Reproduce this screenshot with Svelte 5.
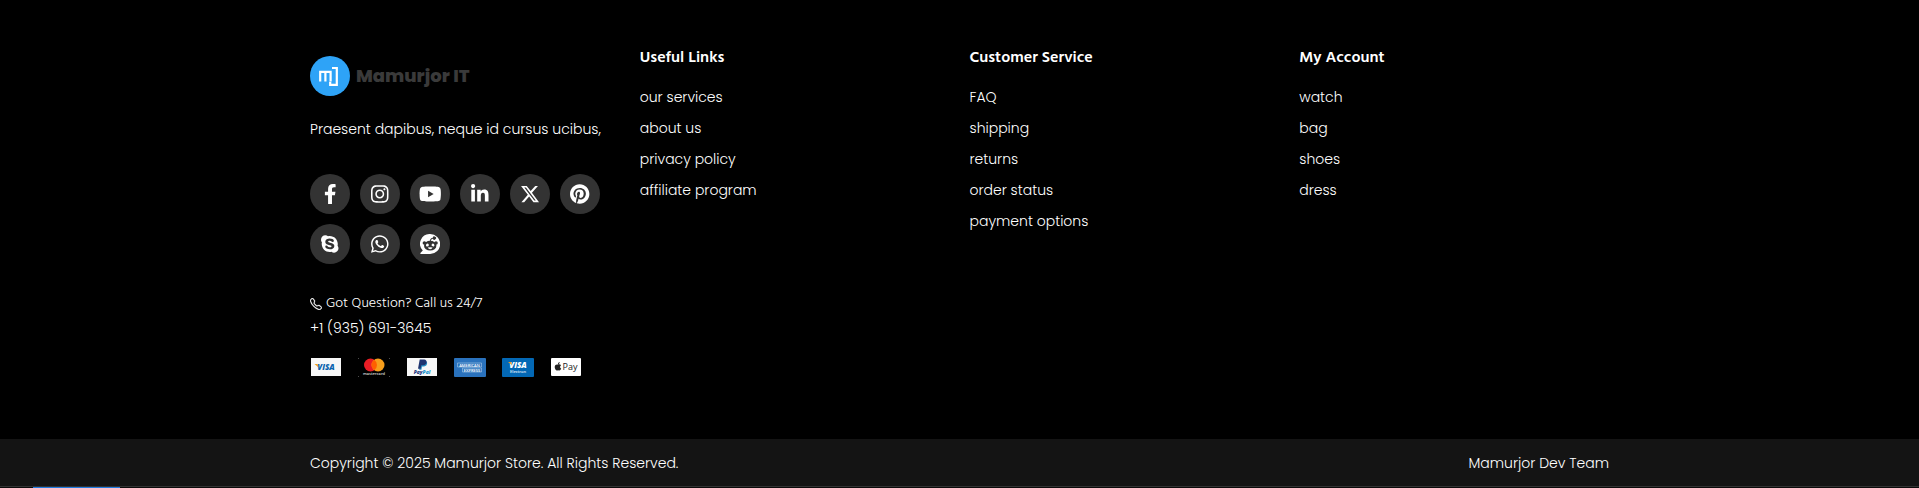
<script>
  const social = [
    { name: 'Facebook', box: '0 0 320 512', d: 'M279.14 288l14.22-92.66h-88.91v-60.13c0-25.35 12.42-50.06 52.24-50.06h40.42V6.26S260.43 0 225.36 0c-73.22 0-121.08 44.38-121.08 124.72v70.62H22.89V288h81.39v224h100.17V288z' },
    { name: 'Instagram', box: '0 0 448 512', d: 'M224.1 141c-63.6 0-114.9 51.3-114.9 114.9s51.3 114.9 114.9 114.9S339 319.5 339 255.9 287.7 141 224.1 141zm0 189.6c-41.1 0-74.7-33.5-74.7-74.7s33.5-74.7 74.7-74.7 74.7 33.5 74.7 74.7-33.6 74.7-74.7 74.7zm146.4-194.3c0 14.9-12 26.8-26.8 26.8-14.9 0-26.8-12-26.8-26.8s12-26.8 26.8-26.8 26.8 12 26.8 26.8zm76.1 27.2c-1.7-35.9-9.9-67.7-36.2-93.9-26.2-26.2-58-34.4-93.9-36.2-37-2.1-147.9-2.1-184.9 0-35.8 1.7-67.6 9.9-93.9 36.1s-34.4 58-36.2 93.9c-2.1 37-2.1 147.9 0 184.9 1.7 35.9 9.9 67.7 36.2 93.9s58 34.4 93.9 36.2c37 2.1 147.9 2.1 184.9 0 35.9-1.7 67.7-9.9 93.9-36.2 26.2-26.2 34.4-58 36.2-93.9 2.1-37 2.1-147.8 0-184.8zM398.8 388c-7.8 19.6-22.9 34.7-42.6 42.6-29.5 11.7-99.5 9-132.1 9s-102.7 2.6-132.1-9c-19.6-7.8-34.7-22.9-42.6-42.6-11.7-29.5-9-99.5-9-132.1s-2.6-102.7 9-132.1c7.8-19.6 22.9-34.7 42.6-42.6 29.5-11.7 99.5-9 132.1-9s102.7-2.6 132.1 9c19.6 7.8 34.7 22.9 42.6 42.6 11.7 29.5 9 99.5 9 132.1s2.7 102.7-9 132.1z' },
    { name: 'YouTube', box: '0 0 576 512', d: 'M549.655 124.083c-6.281-23.65-24.787-42.276-48.284-48.597C458.781 64 288 64 288 64S117.22 64 74.629 75.486c-23.497 6.322-42.003 24.947-48.284 48.597-11.412 42.867-11.412 132.305-11.412 132.305s0 89.438 11.412 132.305c6.281 23.65 24.787 41.5 48.284 47.821C117.22 448 288 448 288 448s170.78 0 213.371-11.486c23.497-6.321 42.003-24.171 48.284-47.821 11.412-42.867 11.412-132.305 11.412-132.305s0-89.438-11.412-132.305zm-317.51 213.508V175.185l142.739 81.205-142.739 81.201z' },
    { name: 'LinkedIn', box: '0 0 448 512', d: 'M100.28 448H7.4V148.9h92.88zM53.79 108.1C24.09 108.1 0 83.5 0 53.8a53.79 53.79 0 0 1 107.58 0c0 29.7-24.1 54.3-53.79 54.3zM447.9 448h-92.68V302.4c0-34.7-.7-79.2-48.29-79.2-48.29 0-55.69 37.7-55.69 76.7V448h-92.78V148.9h89.08v40.8h1.3c12.4-23.5 42.69-48.3 87.88-48.3 94 0 111.28 61.9 111.28 142.3V448z' },
    { name: 'X', box: '0 0 512 512', d: 'M389.2 48h70.6L305.6 224.2 487 464H345L233.7 318.6 106.5 464H35.8L200.7 275.5 26.8 48H172.4L272.9 180.9 389.2 48zM364.4 421.8h39.1L151.1 88h-42L364.4 421.8z' },
    { name: 'Pinterest', box: '0 0 496 512', d: 'M496 256c0 137-111 248-248 248-25.6 0-50.2-3.9-73.4-11.1 10.1-16.5 25.2-43.5 30.8-65 3-11.6 15.4-59 15.4-59 8.1 15.4 31.7 28.5 56.8 28.5 74.8 0 128.7-68.8 128.7-154.3 0-81.9-66.9-143.2-152.9-143.2-107 0-163.9 71.8-163.9 150.1 0 36.4 19.4 81.7 50.3 96.1 4.7 2.2 7.2 1.2 8.3-3.3.8-3.4 5-20.3 6.9-28.1.6-2.5.3-4.7-1.7-7.1-10.1-12.5-18.3-35.3-18.3-56.6 0-54.7 41.4-107.6 112-107.6 60.9 0 103.6 41.5 103.6 100.9 0 67.1-33.9 113.6-78 113.6-24.3 0-42.6-20.1-36.7-44.8 7-29.5 20.5-61.3 20.5-82.6 0-19-10.2-34.9-31.4-34.9-24.9 0-44.9 25.7-44.9 60.2 0 22 7.4 36.8 7.4 36.8s-24.5 103.8-29 123.2c-5 21.4-3 51.6-.9 71.2C65.4 450.9 0 361.1 0 256 0 119 111 8 248 8s248 111 248 248z' },
    { name: 'Skype', box: '0 0 448 512', d: 'M424.7 299.8c2.9-14 4.7-28.9 4.7-43.8 0-113.5-91.9-205.3-205.3-205.3-14.9 0-29.7 1.7-43.8 4.7C161.3 40.7 137.7 32 112 32 50.2 32 0 82.2 0 144c0 25.7 8.7 49.3 23.3 68.2-2.9 14-4.7 28.9-4.7 43.8 0 113.5 91.9 205.3 205.3 205.3 14.9 0 29.7-1.7 43.8-4.7 19 14.6 42.6 23.3 68.2 23.3 61.8 0 112-50.2 112-112 .1-25.6-8.6-49.2-23.2-68.1zm-194.6 91.5c-65.6 0-120.5-29.2-120.5-65 0-16 9-30.6 29.5-30.6 31.2 0 34.1 44.9 88.1 44.9 25.7 0 42.3-11.4 42.3-26.3 0-18.7-16-21.6-42-28-62.5-15.4-117.8-22-117.8-87.2 0-59.2 58.6-81.1 109.1-81.1 55.1 0 110.8 21.9 110.8 55.4 0 16.9-11.4 31.8-30.3 31.8-28.3 0-29.2-33.5-75-33.5-25.7 0-42 7-42 22.5 0 19.8 20.8 21.8 69.1 33 41.4 9.3 90.7 26.8 90.7 77.6 0 59.1-57.1 86.5-112 86.5z' },
    { name: 'WhatsApp', box: '0 0 448 512', d: 'M380.9 97.1C339 55.1 283.2 32 223.9 32c-122.4 0-222 99.6-222 222 0 39.1 10.2 77.3 29.6 111L0 480l117.7-30.9c32.4 17.7 68.9 27 106.1 27h.1c122.3 0 224.1-99.6 224.1-222 0-59.3-25.2-115-67.1-157zm-157 341.6c-33.2 0-65.7-8.9-94-25.7l-6.7-4-69.8 18.3L72 359.2l-4.4-7c-18.5-29.4-28.2-63.3-28.2-98.2 0-101.7 82.8-184.5 184.6-184.5 49.3 0 95.6 19.2 130.4 54.1 34.8 34.9 56.2 81.2 56.1 130.5 0 101.8-84.9 184.6-186.6 184.6zm101.2-138.2c-5.5-2.8-32.8-16.2-37.9-18-5.1-1.9-8.8-2.8-12.5 2.8-3.7 5.6-14.3 18-17.6 21.8-3.2 3.7-6.5 4.2-12 1.4-32.6-16.3-54-29.1-75.5-66-5.7-9.8 5.7-9.1 16.3-30.3 1.8-3.7.9-6.9-.5-9.7-1.4-2.8-12.5-30.1-17.1-41.2-4.5-10.8-9.1-9.3-12.5-9.5-3.2-.2-6.9-.2-10.6-.2-3.7 0-9.7 1.4-14.8 6.9-5.1 5.6-19.4 19-19.4 46.3 0 27.3 19.9 53.7 22.6 57.4 2.8 3.7 39.1 59.7 94.8 83.8 35.2 15.2 49 16.5 66.6 13.9 10.7-1.6 32.8-13.4 37.4-26.4 4.6-13 4.6-24.1 3.2-26.4-1.3-2.5-5-3.9-10.5-6.6z' }
  ];

  const columns = [
    { title: 'Useful Links', links: ['our services', 'about us', 'privacy policy', 'affiliate program'] },
    { title: 'Customer Service', links: ['FAQ', 'shipping', 'returns', 'order status', 'payment options'] },
    { title: 'My Account', links: ['watch', 'bag', 'shoes', 'dress'] }
  ];
</script>

<footer>
  <div class="container top">
    <section class="about">
      <a class="brand" href="#home">
        <svg class="mark" viewBox="0 0 40 40" aria-hidden="true">
          <circle cx="20" cy="20" r="20" fill="#2ea3f7" />
          <g fill="none" stroke="#fff" stroke-width="2.2">
            <path d="M10.2 25.500V15.800H20.600V25.500M15.400 15.800V25.500" />
            <path d="M22 12H26.800V28.800H20.200V25.800" />
          </g>
        </svg>
        <span>Mamurjor IT</span>
      </a>
      <p class="intro">Praesent dapibus, neque id cursus ucibus,</p>

      <div class="social">
        {#each social as item}
          <a href="#{item.name}" aria-label={item.name}>
            <svg viewBox={item.box}><path d={item.d} /></svg>
          </a>
        {/each}
        <a href="#Reddit" aria-label="Reddit">
          <svg viewBox="0 0 20 20">
            <path d="M10.2 0A9.8 9.8 0 0 1 10.2 20H1.2C.3 20 .1 19.4.6 18.8L2.8 16.6A9.8 9.8 0 0 1 10.200 0z" />
            <g fill="#333">
              <path d="M9.800 7c.2-1.800 1.400-3 3-3.200a1.600 1.600 0 1 1 .1.900c-1.200.2-2 .9-2.200 2.300z" />
              <circle cx="4.400" cy="9" r="1.800" />
              <circle cx="16" cy="9" r="1.800" />
              <ellipse cx="10.200" cy="11.700" rx="6.200" ry="4.900" />
            </g>
            <path d="M6 11.400c0-1.200.7-2 1.500-2s1.400.9 1.300 1.900c-.1 1-.7 1.100-1.400 1.100S6 12.200 6 11.400zM14.400 11.400c0-1.200-.7-2-1.500-2s-1.400.9-1.300 1.900c.1 1 .7 1.100 1.400 1.100s1.400-.2 1.400-1zM7.800 13.600q2.400-.5 4.800 0-.6 1.700-2.400 1.700t-2.400-1.700z" />
          </svg>
        </a>
      </div>

      <div class="call">
        <svg viewBox="0 0 16 16" aria-hidden="true"><path d="M3.654 1.328a.678.678 0 0 0-1.015-.063L1.605 2.3c-.483.484-.661 1.169-.45 1.77a17.6 17.6 0 0 0 4.168 6.608 17.6 17.6 0 0 0 6.608 4.168c.601.211 1.286.033 1.77-.45l1.034-1.034a.678.678 0 0 0-.063-1.015l-2.307-1.794a.68.68 0 0 0-.58-.122l-2.19.547a1.75 1.75 0 0 1-1.657-.459L5.482 8.062a1.75 1.75 0 0 1-.46-1.657l.548-2.19a.68.68 0 0 0-.122-.58zM1.884.511a1.745 1.745 0 0 1 2.612.163L6.29 2.98c.329.423.445.974.315 1.494l-.547 2.19a.68.68 0 0 0 .178.643l2.457 2.457a.68.68 0 0 0 .644.178l2.189-.547a1.75 1.75 0 0 1 1.494.315l2.306 1.794c.829.645.905 1.87.163 2.611l-1.034 1.034c-.74.74-1.846 1.065-2.877.702a18.6 18.6 0 0 1-7.01-4.42 18.6 18.6 0 0 1-4.42-7.009c-.362-1.03-.037-2.137.703-2.877z" /></svg>
        <span>Got Question? Call us 24/7</span>
      </div>
      <a class="phone" href="tel:+19356913645">+1 (935) 691-3645</a>

      <div class="payments">
        <svg viewBox="0 0 32 19" role="img" aria-label="Visa">
          <rect x="1" width="30" height="18" fill="#f7f7f7" />
          <text x="16" y="12" font-size="8" fill="#0a63ae">VISA</text>
          <path d="M4.500 6h3l1 3.500z" fill="#f0a020" />
        </svg>
        <svg viewBox="0 0 32 19" role="img" aria-label="Mastercard">
          <path d="M0 1V0h1M31 0h1v1M0 18v1h1M31 19h1v-1" fill="none" stroke="#666" />
          <circle cx="12.500" cy="7" r="6.500" fill="#ea1d25" />
          <circle cx="20" cy="7" r="6.500" fill="#f79e1b" />
          <path d="M16.250 1.700a6.500 6.500 0 0 1 0 10.600a6.500 6.500 0 0 1 0-10.600z" fill="#ff5f00" />
          <text class="plain" x="16" y="17" font-size="4" fill="#ddd">mastercard</text>
        </svg>
        <svg viewBox="0 0 32 19" role="img" aria-label="PayPal">
          <rect x="1" width="30" height="18" fill="#f7f7f7" />
          <path d="M15 3h4c3 0 3 5-1 5.500h-2l-.6 3.200h-2.300z" fill="#2790c3" />
          <path d="M13.700 1.500h4.500c3.500 0 3.300 5.700-1.200 5.700h-1.700l-.7 3.600h-2.600z" fill="#1f3470" />
          <text x="16" y="16" font-size="5" fill="#253b80">Pay<tspan fill="#1b95ce">Pal</tspan></text>
        </svg>
        <svg viewBox="0 0 32 19" role="img" aria-label="American Express">
          <rect width="32" height="19" rx="1" fill="#2a72bd" />
          <g fill="none" stroke="#a9c9e8" stroke-width=".6">
            <path d="M3.500 5h24v4h-24zM8.500 10h19v4h-19z" />
          </g>
          <text class="plain" x="15.500" y="8.500" font-size="4" fill="#fff">AMERICAN</text>
          <text class="plain" x="18" y="13.500" font-size="4" fill="#fff">EXPRESS</text>
        </svg>
        <svg viewBox="0 0 32 19" role="img" aria-label="Visa Electron">
          <rect width="32" height="19" rx="1" fill="#0368b5" />
          <text x="16" y="10" font-size="8" fill="#fff">VISA</text>
          <path d="M6 4h3l1 3z" fill="#f0a020" />
          <text class="plain" x="16" y="15" font-size="4" fill="#e4effa">Electron</text>
        </svg>
        <svg viewBox="0 0 32 19" role="img" aria-label="Apple Pay">
          <rect x="1" width="30" height="18" rx="1" fill="#fff" />
          <path d="M7.900 6.600c-.9-.5-3.200-.3-3.200 2.500 0 1.900 1.300 3.500 2.200 3.500.5 0 .7-.3 1.200-.3s.8.3 1.300.3c.8 0 1.500-1.200 1.800-2-1.500-.8-1.400-2.700-.1-3.400-1-1.200-2.400-.9-3.200-.6zM8 6.200c-.1-1.100.8-2 1.700-2.100.1 1.100-.7 2-1.700 2.100z" fill="#222" />
          <text class="pay" x="20" y="12" font-size="9" fill="#222">Pay</text>
        </svg>
      </div>
    </section>

    {#each columns as column}
      <nav aria-label={column.title}>
        <h4>{column.title}</h4>
        <ul>
          {#each column.links as link}
            <li><a href="#{link}">{link}</a></li>
          {/each}
        </ul>
      </nav>
    {/each}
  </div>

  <div class="bottom">
    <div class="container legal">
      <p>Copyright © 2025 Mamurjor Store. All Rights Reserved.</p>
      <p>Mamurjor Dev Team</p>
    </div>
  </div>
  <div class="strip"><span></span></div>
</footer>

<style>
  :global(body) {
    margin: 0;
    background: #000;
  }

  footer {
    background: #000;
    color: #fff;
    font-family: Poppins, Inter, sans-serif;
    font-size: 14px;
    font-weight: 300;
    line-height: 21px;
  }

  a {
    color: inherit;
    text-decoration: none;
  }

  p,
  h4,
  ul {
    margin: 0;
    padding: 0;
  }

  .container {
    box-sizing: border-box;
    max-width: 1319px;
    margin: 0 auto;
    padding: 0 10px;
  }

  .top {
    display: grid;
    grid-template-columns: repeat(4, minmax(0, 1fr));
    gap: 20px;
    padding-top: 48px;
    padding-bottom: 62px;
  }

  .about {
    display: flex;
    flex-direction: column;
    align-items: flex-start;
  }

  .brand {
    display: flex;
    align-items: center;
    gap: 6px;
    margin-top: 8px;
    color: #3a3a3a;
    font-size: 18px;
    font-weight: 800;
  }

  .brand span {
    padding-bottom: 2px;
  }

  .mark {
    width: 40px;
    height: 40px;
  }

  .intro {
    margin-top: 23px;
  }

  .social {
    display: flex;
    flex-wrap: wrap;
    gap: 10px;
    margin-top: 34px;
  }

  .social a {
    display: flex;
    align-items: center;
    justify-content: center;
    width: 40px;
    height: 40px;
    border-radius: 50%;
    background: #333;
  }

  .social svg {
    height: 20px;
    fill: #fff;
  }

  .call {
    display: flex;
    align-items: center;
    gap: 4px;
    margin-top: 29px;
    font-family: Hind, Mukta, "Hind Siliguri", "Noto Sans", sans-serif;
    font-size: 14px;
    font-weight: 300;
  }

  .call svg {
    width: 12px;
    height: 12px;
    fill: #fff;
    stroke: #fff;
    stroke-width: .4;
  }

  .phone {
    margin-top: 4px;
  }

  .payments {
    display: flex;
    gap: 16px;
    margin-top: 19px;
  }

  .payments svg {
    width: 32px;
    height: 19px;
  }

  .payments text {
    font-family: "Open Sans", sans-serif;
    font-style: italic;
    font-weight: 800;
    text-anchor: middle;
  }

  .payments .plain {
    font-style: normal;
    font-weight: 600;
  }

  .payments .pay {
    font-style: normal;
    font-weight: 500;
  }

  h4 {
    font-family: Hind, Mukta, "Hind Siliguri", "Noto Sans", sans-serif;
    font-size: 16px;
    font-weight: 600;
    line-height: 21px;
  }

  ul {
    display: grid;
    gap: 10px;
    margin-top: 18px;
    list-style: none;
  }

  .bottom {
    padding: 14px 0 12px;
    border-bottom: 1px solid #333;
    background: #141414;
  }

  .legal {
    display: flex;
    justify-content: space-between;
  }

  .strip {
    padding-left: 33px;
    background: #0b0b0b;
  }

  .strip span {
    display: block;
    width: 87px;
    height: 1px;
    background: #1f7ae0;
  }
</style>
